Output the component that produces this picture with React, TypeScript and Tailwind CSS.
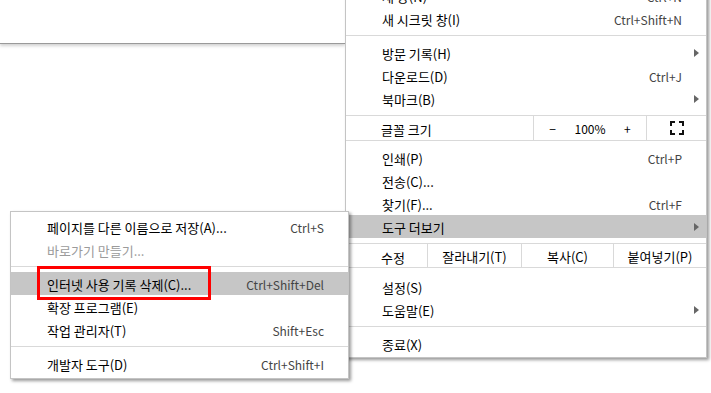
import React from 'react';
import clsx from 'clsx';

type Item = {
  label?: string;
  shortcut?: string;
  arrow?: boolean;
  active?: boolean;
  disabled?: boolean;
  sep?: boolean;
};

const Arrow = () => (
  <svg width="5" height="8" viewBox="0 0 5 8" className="block">
    <path d="M0 0 L5 4 L0 8 Z" fill="#666" />
  </svg>
);

const MenuRow: React.FC<{ item: Item }> = ({ item }) => {
  if (item.sep) return <div className="h-px bg-[#d9d9d9] mt-[5px] mb-[5px]" />;
  return (
    <div className={clsx('flex items-center h-[23px] pl-[36px]', item.active && 'bg-[#c6c6c6]')}>
      <span className={clsx('pt-[2px] text-[13px]', item.disabled ? 'text-[#9b9b9b]' : 'text-black')}>
        {item.label}
      </span>
      <span className="ml-auto pt-[2px] text-[#444]">{item.shortcut}</span>
      <div className="w-[24px] flex justify-end pr-[7px]">{item.arrow && <Arrow />}</div>
    </div>
  );
};

const FullscreenIcon = () => (
  <svg width="14" height="14" viewBox="0 0 14 14" className="block">
    <path
      d="M1 5 V1 H5 M9 1 H13 V5 M13 9 V13 H9 M5 13 H1 V9"
      fill="none"
      stroke="#111"
      strokeWidth="2"
    />
  </svg>
);

const topItems: Item[] = [
  { label: '새 창(N)', shortcut: 'Ctrl+N' },
  { label: '새 시크릿 창(I)', shortcut: 'Ctrl+Shift+N' },
  { sep: true },
  { label: '방문 기록(H)', arrow: true },
  { label: '다운로드(D)', shortcut: 'Ctrl+J' },
  { label: '북마크(B)', arrow: true },
];

const midItems: Item[] = [
  { label: '인쇄(P)', shortcut: 'Ctrl+P' },
  { label: '전송(C)...' },
  { label: '찾기(F)...', shortcut: 'Ctrl+F' },
  { label: '도구 더보기', arrow: true, active: true },
];

const bottomItems: Item[] = [
  { label: '설정(S)' },
  { label: '도움말(E)', arrow: true },
  { sep: true },
  { label: '종료(X)' },
];

const subItems: Item[] = [
  { label: '페이지를 다른 이름으로 저장(A)...', shortcut: 'Ctrl+S' },
  { label: '바로가기 만들기...', disabled: true },
  { sep: true },
  { label: '인터넷 사용 기록 삭제(C)...', shortcut: 'Ctrl+Shift+Del', active: true },
  { label: '확장 프로그램(E)' },
  { label: '작업 관리자(T)', shortcut: 'Shift+Esc' },
  { sep: true },
  { label: '개발자 도구(D)', shortcut: 'Ctrl+Shift+I' },
];

const App: React.FC = () => {
  return (
    <div
      className="relative w-[711px] h-[393px] bg-white overflow-hidden text-[12px] leading-none"
      style={{ fontFamily: '"Noto Sans CJK KR", "Noto Sans", sans-serif' }}
    >
      {/* page behind the menus */}
      <div className="w-[345px] h-[44px] bg-white border-b border-[#9a9a9a] shadow-[0_2px_3px_rgba(0,0,0,0.18)]" />

      {/* main chrome menu */}
      <div className="absolute left-[345px] top-[-20px] w-[362px] bg-white border border-[#c4c4c4] pt-[3px] pb-[2px] shadow-[2px_2px_3px_rgba(0,0,0,0.4)]">
        {topItems.map((it, i) => (
          <MenuRow key={i} item={it} />
        ))}

        {/* 글꼴 크기 */}
        <div className="flex h-[26px] mt-[5px] mb-[5px] border-y border-[#d9d9d9]">
          <div className="flex-1 flex items-center pl-[35px] pt-[2px] text-[13px]">글꼴 크기</div>
          <div className="w-[113px] border-l border-[#d9d9d9] grid grid-cols-3 items-center text-center pt-[2px]">
            <span>−</span>
            <span>100%</span>
            <span>+</span>
          </div>
          <div className="w-[60px] border-l border-[#d9d9d9] flex items-center justify-center">
            <FullscreenIcon />
          </div>
        </div>

        {midItems.map((it, i) => (
          <MenuRow key={i} item={it} />
        ))}

        {/* 수정 */}
        <div className="flex h-[25px] mt-[5px] mb-[7px] border-y border-[#d9d9d9] text-[13px]">
          <div className="w-[81px] flex items-center pl-[35px] pt-[4px]">수정</div>
          <div className="w-[94px] border-l border-[#d9d9d9] flex items-center justify-center pt-[1px]">잘라내기(T)</div>
          <div className="w-[92px] border-l border-[#d9d9d9] flex items-center justify-center pt-[1px]">복사(C)</div>
          <div className="flex-1 border-l border-[#d9d9d9] flex items-center justify-center pt-[1px]">붙여넣기(P)</div>
        </div>

        {bottomItems.map((it, i) => (
          <MenuRow key={i} item={it} />
        ))}
      </div>

      {/* 도구 더보기 submenu */}
      <div className="absolute left-[10px] top-[211px] w-[339px] bg-white border border-[#c4c4c4] pt-[3px] pb-[3px] shadow-[2px_2px_3px_rgba(0,0,0,0.4)]">
        {subItems.map((it, i) => (
          <MenuRow key={i} item={it} />
        ))}
      </div>

      {/* red annotation box */}
      <div className="absolute left-[37px] top-[266px] w-[174px] h-[34px] border-[3px] border-[#ff0000]" />
    </div>
  );
};

export default App;
